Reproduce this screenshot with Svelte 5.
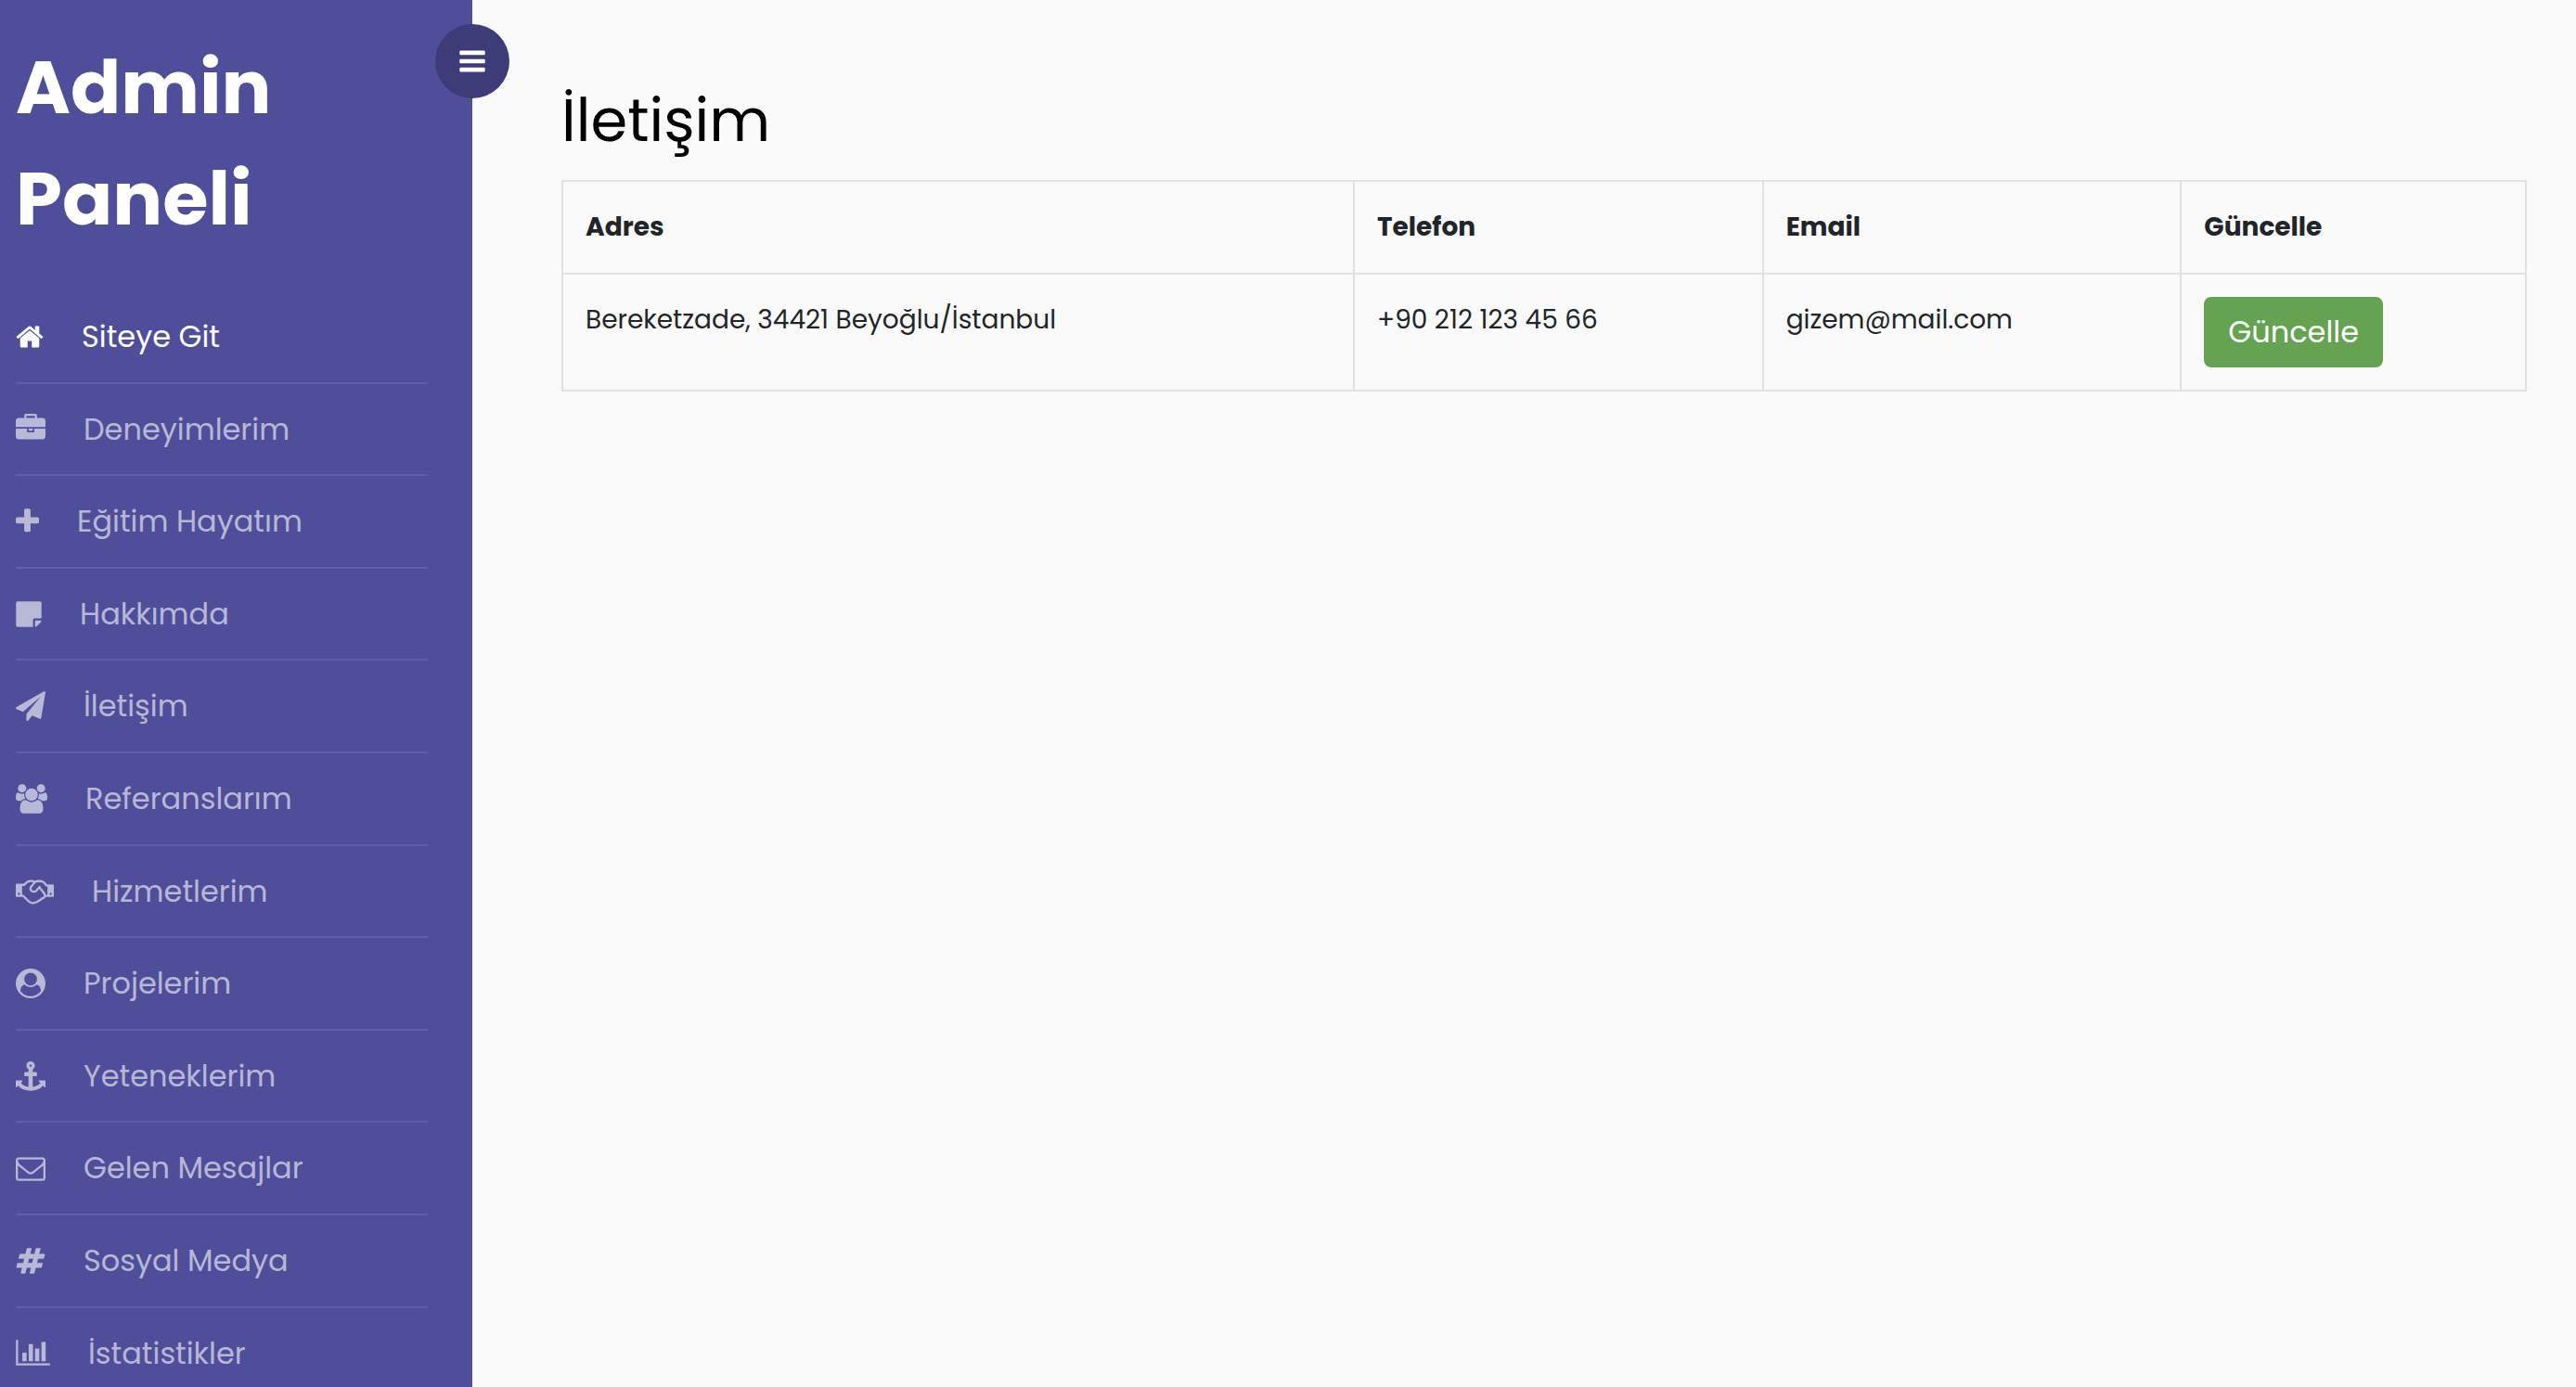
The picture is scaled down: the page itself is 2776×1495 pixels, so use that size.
<script>
  const menu = [
    {
      label: 'Siteye Git',
      active: true,
      box: '64 0 1664 1792',
      width: 30,
      d: 'M1472 992v480q0 26-19 45t-45 19h-384v-384h-256v384h-384q-26 0-45-19t-19-45v-480q0-1 .5-3t.5-3l575-474 575 474q1 2 1 6zm223-69l-62 74q-8 9-21 11h-3q-13 0-21-7l-692-577-692 577q-12 8-24 7-13-2-21-11l-62-74q-8-10-7-23.5t11-21.5l719-599q32-26 76-26t76 26l244 204v-195q0-14 9-23t23-9h192q14 0 23 9t9 23v408l219 182q10 8 11 21.5t-7 23.5z'
    },
    {
      label: 'Deneyimlerim',
      box: '0 0 1792 1792',
      width: 32,
      d: 'M640 256h512v-128h-512v128zm1152 640v480q0 66-47 113t-113 47h-1472q-66 0-113-47t-47-113v-480h672v160q0 26 19 45t45 19h320q26 0 45-19t19-45v-160h672zm-768 0v128h-256v-128h256zm768-480v384h-1792v-384q0-66 47-113t113-47h352v-160q0-40 28-68t68-28h576q40 0 68 28t28 68v160h352q66 0 113 47t47 113z'
    },
    {
      label: 'Eğitim Hayatım',
      box: '192 0 1408 1792',
      width: 25,
      d: 'M1600 736v192q0 40-28 68t-68 28h-416v416q0 40-28 68t-68 28h-192q-40 0-68-28t-28-68v-416h-416q-40 0-68-28t-28-68v-192q0-40 28-68t68-28h416v-416q0-40 28-68t68-28h192q40 0 68 28t28 68v416h416q40 0 68 28t28 68z'
    },
    {
      label: 'Hakkımda',
      box: '0 0 1536 1792',
      width: 28,
      d: 'M1024 1248v416h-928q-40 0-68-28t-28-68v-1344q0-40 28-68t68-28h1344q40 0 68 28t28 68v928h-416q-40 0-68 28t-28 68zm128 32h381q-15 82-65 132l-184 184q-50 50-132 65v-381z'
    },
    {
      label: 'İletişim',
      box: '0 0 1792 1792',
      width: 32,
      d: 'M1764 11q33 24 27 64l-256 1536q-5 29-32 45-14 8-31 8-11 0-24-5l-453-185-242 295q-18 23-49 23-13 0-22-4-19-7-30.5-23.5t-11.5-36.5v-349l864-1059-1069 925-395-162q-37-14-40-55-2-40 32-59l1664-960q15-9 32-9 20 0 36 11z'
    },
    {
      label: 'Referanslarım',
      box: '0 0 1920 1792',
      width: 34,
      d: 'M593 896q-162 5-265 128h-134q-82 0-138-40.5t-56-118.5q0-353 124-353 6 0 43.5 21t97.5 42.5 119 21.5q67 0 133-23-5 37-5 66 0 139 81 256zm1071 637q0 120-73 189.5t-194 69.5h-874q-121 0-194-69.5t-73-189.5q0-53 3.5-103.5t14-109 26.5-108.5 43-97.5 62-81 85.5-53.5 111.5-20q10 0 43 21.5t73 48 107 48 135 21.5 135-21.5 107-48 73-48 43-21.5q61 0 111.5 20t85.5 53.5 62 81 43 97.5 26.5 108.5 14 109 3.5 103.5zm-1024-1277q0 106-75 181t-181 75-181-75-75-181 75-181 181-75 181 75 75 181zm704 384q0 159-112.5 271.5t-271.5 112.5-271.5-112.5-112.5-271.5 112.5-271.5 271.5-112.5 271.5 112.5 112.5 271.5zm576 225q0 78-56 118.5t-138 40.5h-134q-103-123-265-128 81-117 81-256 0-29-5-66 66 23 133 23 59 0 119-21.5t97.5-42.5 43.5-21q124 0 124 353zm-128-609q0 106-75 181t-181 75-181-75-75-181 75-181 181-75 181 75 75 181z'
    },
    {
      label: 'Hizmetlerim',
      box: '0 0 2304 1792',
      width: 41,
      d: 'M192 1152q40 0 56-32t0-64-56-32-56 32 0 64 56 32zm1473-58q-10-13-38.5-50t-41.5-54-38-49-42.5-53-40.5-47-45-49l-125 140q-83 94-208.5 92t-205.5-98q-57-69-56.5-158t58.5-157l177-206q-22-11-51-16.5t-47.5-6-56.5.5-49 1q-92 0-158 66l-158 158h-155v544q5 0 21-.5t22 0 19.5 2 20.5 4.5 17.5 8.5 18.5 13.5l297 292q115 111 227 111 78 0 125-47 57 20 112.5-8t72.5-85q74 6 127-44 20-18 36-45.5t14-50.5q10 10 43 10 43 0 77-21t49.5-53 12-71.5-30.5-73.5zm159 58h96v-512h-93l-157-180q-66-76-169-76h-167q-89 0-146 67l-209 243q-28 33-28 75t27 75q43 51 110 52t111-49l193-218q25-23 53.5-21.5t47 27 8.5 56.5q16 19 56 63t60 68q29 36 82.5 105.5t64.5 84.5q52 66 60 140zm288 0q40 0 56-32t0-64-56-32-56 32 0 64 56 32zm192-576v640q0 26-19 45t-45 19h-434q-27 65-82 106.5t-125 51.5q-33 48-80.5 81.5t-102.5 45.5q-42 53-104.5 81.5t-128.5 24.5q-60 34-126 39.5t-127.5-14-117-53.5-103.5-81l-287-282h-358q-26 0-45-19t-19-45v-672q0-26 19-45t45-19h421q14-14 47-48t47.5-48 44-40 50.5-37.5 51-25.5 62-19.5 68-5.5h117q99 0 181 56 82-56 181-56h167q35 0 67 6t56.5 14.5 51.5 26.5 44.5 31 43 39.5 39 42 41 48 41.5 48.5h355q26 0 45 19t19 45z'
    },
    {
      label: 'Projelerim',
      box: '0 0 1792 1792',
      width: 32,
      d: 'M1523 1339q-22-155-87.5-257.5t-184.5-118.5q-67 74-159.5 115.5t-195.5 41.5-195.5-41.5-159.5-115.5q-119 16-184.5 118.5t-87.5 257.5q106 150 271 237.5t356 87.5 356-87.5 271-237.5zm-243-699q0-159-112.5-271.5t-271.5-112.5-271.5 112.5-112.5 271.5 112.5 271.5 271.5 112.5 271.5-112.5 112.5-271.5zm512 256q0 182-71 347.5t-190.5 286-285.5 191.5-349 71q-182 0-348-71t-286-191-191-286-71-348 71-348 191-286 286-191 348-71 348 71 286 191 191 286 71 348z'
    },
    {
      label: 'Yeteneklerim',
      box: '0 0 1792 1792',
      width: 32,
      d: 'M960 256q0-26-19-45t-45-19-45 19-19 45 19 45 45 19 45-19 19-45zm832 928v352q0 22-20 30-8 2-12 2-12 0-23-9l-93-93q-119 143-318.5 226.5t-429.5 83.5-429.5-83.5-318.5-226.5l-93 93q-9 9-23 9-4 0-12-2-20-8-20-30v-352q0-14 9-23t23-9h352q22 0 30 20 8 19-7 35l-100 100q67 91 189.5 153.5t271.5 82.5v-647h-192q-26 0-45-19t-19-45v-128q0-26 19-45t45-19h192v-163q-58-34-93-92.5t-35-128.5q0-106 75-181t181-75 181 75 75 181q0 70-35 128.5t-93 92.5v163h192q26 0 45 19t19 45v128q0 26-19 45t-45 19h-192v647q149-20 271.5-82.5t189.5-153.5l-100-100q-15-16-7-35 8-20 30-20h352q14 0 23 9t9 23z'
    },
    {
      label: 'Gelen Mesajlar',
      box: '0 0 1792 1792',
      width: 32,
      d: 'M1664 1504v-768q-32 36-69 66-268 206-426 338-51 43-83 67t-86.5 48.5-102.5 24.5h-2q-48 0-102.5-24.5t-86.5-48.5-83-67q-158-132-426-338-37-30-69-66v768q0 13 9.5 22.5t22.5 9.5h1472q13 0 22.5-9.5t9.5-22.5zm0-1051v-24.5l-.5-13-3-12.5-5.5-9-9-7.5-14-2.5h-1472q-13 0-22.5 9.5t-9.5 22.5q0 168 147 284 193 152 401 317 6 5 35 29.5t46 37.5 44.5 31.5 50.5 27.5 43 9h2q20 0 43-9t50.5-27.5 44.5-31.5 46-37.5 35-29.5q208-165 401-317 54-43 100.5-115.5t46.5-131.5zm128-37v1088q0 66-47 113t-113 47h-1472q-66 0-113-47t-47-113v-1088q0-66 47-113t113-47h1472q66 0 113 47t47 113z'
    },
    {
      label: 'Sosyal Medya',
      box: '0 0 1792 1792',
      width: 32,
      d: 'M991 1024l64-256h-254l-64 256h254zm768-504l-56 224q-7 24-31 24h-327l-64 256h311q15 0 25 12 10 14 6 28l-56 224q-5 24-31 24h-327l-81 328q-7 24-31 24h-224q-16 0-26-12-9-12-6-28l78-312h-254l-81 328q-7 24-31 24h-225q-15 0-25-12-9-12-6-28l78-312h-311q-15 0-25-12-9-12-6-28l56-224q7-24 31-24h327l64-256h-311q-15 0-25-12-10-14-6-28l56-224q5-24 31-24h327l81-328q7-24 32-24h224q15 0 25 12 9 12 6 28l-78 312h254l81-328q7-24 32-24h224q15 0 25 12 9 12 6 28l-78 312h311q15 0 25 12 9 12 6 28z'
    },
    {
      label: 'İstatistikler',
      box: '0 0 2048 1792',
      width: 37,
      d: 'M640 896v512h-256v-512h256zm384-512v1024h-256v-1024h256zm1024 1152v128h-2048v-1536h128v1408h1920zm-640-896v768h-256v-768h256zm384-384v1152h-256v-1152h256z'
    }
  ];

  const contacts = [
    { address: 'Bereketzade, 34421 Beyoğlu/İstanbul', phone: '+90 212 123 45 66', email: 'gizem@mail.com' }
  ];
</script>

<div class="page">
  <aside class="sidebar">
    <button class="toggle" type="button" aria-label="Menü">
      <svg viewBox="128 0 1536 1792" width="28" height="32" aria-hidden="true">
        <path d="M1664 1344v128q0 26-19 45t-45 19h-1408q-26 0-45-19t-19-45v-128q0-26 19-45t45-19h1408q26 0 45 19t19 45zm0-512v128q0 26-19 45t-45 19h-1408q-26 0-45-19t-19-45v-128q0-26 19-45t45-19h1408q26 0 45 19t19 45zm0-512v128q0 26-19 45t-45 19h-1408q-26 0-45-19t-19-45v-128q0-26 19-45t45-19h1408q26 0 45 19t19 45z" />
      </svg>
    </button>
    <div class="scroll">
      <h1>Admin Paneli</h1>
      <nav>
        <ul>
          {#each menu as item}
            <li class:active={item.active}>
              <a href="#top">
                <svg viewBox={item.box} width={item.width} height="32" aria-hidden="true">
                  <path fill-rule="evenodd" d={item.d} />
                </svg>
                <span>{item.label}</span>
              </a>
            </li>
          {/each}
        </ul>
      </nav>
    </div>
  </aside>

  <main>
    <h2>İletişim</h2>
    <table>
      <thead>
        <tr>
          <th scope="col">Adres</th>
          <th scope="col">Telefon</th>
          <th scope="col">Email</th>
          <th scope="col">Güncelle</th>
        </tr>
      </thead>
      <tbody>
        {#each contacts as row}
          <tr>
            <td>{row.address}</td>
            <td>{row.phone}</td>
            <td>{row.email}</td>
            <td><button class="update" type="button">Güncelle</button></td>
          </tr>
        {/each}
      </tbody>
    </table>
  </main>
</div>

<style>
  :global(body) {
    margin: 0;
    background: #fafafa;
    color: #212529;
    font-family: Poppins, Inter, "Open Sans", sans-serif;
    font-size: 28px;
    line-height: 1.8;
  }

  .page {
    display: flex;
    align-items: stretch;
    height: 100vh;
  }

  .sidebar {
    position: relative;
    box-sizing: border-box;
    flex: 0 0 509px;
    background: #4f4e9b;
    color: #fff;
  }

  .scroll {
    box-sizing: border-box;
    height: 100%;
    padding: 34px 48px 0 17px;
    overflow-y: auto;
    scrollbar-width: none;
  }

  .toggle {
    position: absolute;
    top: 26px;
    right: -40px;
    display: flex;
    align-items: center;
    justify-content: center;
    width: 80px;
    height: 80px;
    padding: 0;
    border: 0;
    border-radius: 50%;
    background: #3d3c78;
    color: #fff;
    cursor: pointer;
  }

  svg {
    flex: none;
    fill: currentColor;
  }

  h1 {
    width: min-content;
    margin: 0 0 40px;
    font-size: 80px;
    font-weight: 700;
    line-height: 1.5;
  }

  ul {
    margin: 0;
    padding: 0;
    list-style: none;
    font-size: 32px;
  }

  li {
    border-bottom: 2px solid rgba(255, 255, 255, 0.1);
  }

  li a {
    display: flex;
    align-items: center;
    gap: 41px;
    padding: 20px 0;
    color: rgba(255, 255, 255, 0.6);
    text-decoration: none;
  }

  li.active a {
    color: #fff;
  }

  main {
    flex: 1;
    min-width: 0;
    padding: 82px 53px 48px 96px;
  }

  h2 {
    margin: 0 0 16px;
    color: #000;
    font-size: 64px;
    font-weight: 400;
    line-height: 1.5;
  }

  table {
    width: 100%;
    border-collapse: collapse;
  }

  th,
  td {
    padding: 24px;
    border: 2px solid #dee2e6;
    text-align: left;
    vertical-align: top;
  }

  th {
    font-weight: 700;
  }

  .update {
    display: block;
    padding: 12px 24px;
    border: 2px solid #63a352;
    border-radius: 8px;
    background: #63a352;
    color: #fff;
    font: inherit;
    font-size: 32px;
    line-height: 1.5;
    cursor: pointer;
  }
</style>
